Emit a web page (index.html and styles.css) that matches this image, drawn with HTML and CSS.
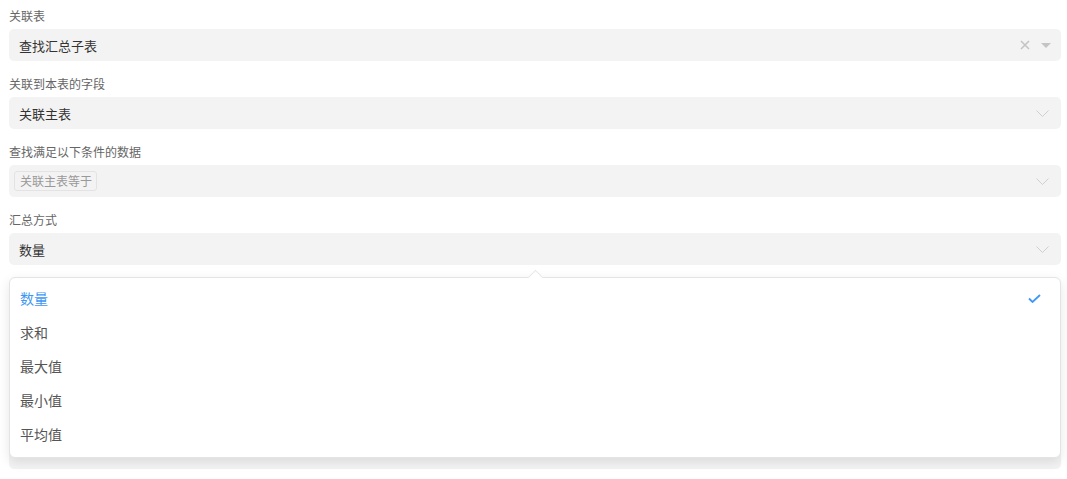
FILE: index.html
```html
<!DOCTYPE html>
<html lang="zh">
<head>
<meta charset="utf-8">
<link rel="stylesheet" href="styles.css">
</head>
<body>
<div class="form">
  <div class="group">
    <div class="label">关联表</div>
    <div class="select">
      <span class="value">查找汇总子表</span>
      <span class="icons">
        <svg class="clear" width="10" height="10" viewBox="0 0 10 10"><path d="M1 1L9 9M9 1L1 9" stroke="#c4c4c4" stroke-width="1.6" fill="none"/></svg>
        <svg class="caret" width="10" height="5" viewBox="0 0 10 5"><path d="M0 0H10L5 5Z" fill="#c4c4c4"/></svg>
      </span>
    </div>
  </div>
  <div class="group">
    <div class="label">关联到本表的字段</div>
    <div class="select">
      <span class="value">关联主表</span>
      <svg class="chev" width="13" height="7" viewBox="0 0 13 7"><path d="M0.5 0.5L6.5 6.5L12.5 0.5" stroke="#cfcfcf" stroke-width="1" fill="none"/></svg>
    </div>
  </div>
  <div class="group">
    <div class="label">查找满足以下条件的数据</div>
    <div class="select tags">
      <span class="tag">关联主表等于</span>
      <svg class="chev" width="13" height="7" viewBox="0 0 13 7"><path d="M0.5 0.5L6.5 6.5L12.5 0.5" stroke="#cfcfcf" stroke-width="1" fill="none"/></svg>
    </div>
  </div>
  <div class="group open">
    <div class="label">汇总方式</div>
    <div class="select">
      <span class="value">数量</span>
      <svg class="chev" width="13" height="7" viewBox="0 0 13 7"><path d="M0.5 0.5L6.5 6.5L12.5 0.5" stroke="#cfcfcf" stroke-width="1" fill="none"/></svg>
    </div>
    <div class="dropdown">
      <div class="option selected"><span>数量</span>
        <svg width="13" height="9" viewBox="0 0 13 9"><path d="M1 4.5L4.5 8L12 1" stroke="#3f99f4" stroke-width="1.8" fill="none"/></svg>
      </div>
      <div class="option"><span>求和</span></div>
      <div class="option"><span>最大值</span></div>
      <div class="option"><span>最小值</span></div>
      <div class="option"><span>平均值</span></div>
    </div>
  </div>
  <div class="group covered">
    <div class="select"></div>
  </div>
</div>
</body>
</html>
```

FILE: styles.css
```css
html, body {
  margin: 0;
  padding: 0;
  background: #fff;
  overflow: hidden;
}
body {
  font-family: "Noto Sans CJK SC", "Noto Sans", sans-serif;
  color: #333;
  height: 479px;
}
.form {
  padding: 6px 6px 0 9px;
}
.group {
  margin-bottom: 13px;
  position: relative;
}
.group.covered {
  margin-top: 172px;
}
.label {
  height: 20px;
  line-height: 20px;
  font-size: 12px;
  color: #666;
  margin-bottom: 3px;
}
.select {
  height: 32px;
  background: #f3f3f3;
  border-radius: 5px;
  display: flex;
  align-items: center;
  justify-content: space-between;
  padding: 0 11px 0 10px;
  box-sizing: border-box;
}
.value {
  font-size: 13px;
  color: #333;
}
.icons {
  display: flex;
  align-items: center;
  gap: 11px;
  margin-right: -1px;
}
.chev {
  margin-right: 1px;
}
.tags {
  padding-left: 5px;
}
.tag {
  font-size: 12px;
  color: #999;
  border: 1px solid #e3e3e3;
  border-radius: 3px;
  height: 18px;
  line-height: 18px;
  padding: 0 4px 0 5px;
  background: #f3f3f3;
}
.dropdown {
  position: absolute;
  left: 0;
  right: 0;
  top: 67px;
  z-index: 5;
  background: #fff;
  border: 1px solid #e4e4e4;
  border-radius: 6px;
  box-shadow: 0 4px 12px rgba(0, 0, 0, 0.1);
  padding: 3px 0 6px;
}
.dropdown::before {
  content: "";
  position: absolute;
  top: -6px;
  left: 520px;
  width: 10px;
  height: 10px;
  background: #fff;
  border-left: 1px solid #e9e9e9;
  border-top: 1px solid #e9e9e9;
  transform: rotate(45deg);
}
.option {
  height: 34px;
  display: flex;
  align-items: center;
  justify-content: space-between;
  padding: 0 19px 0 10px;
  font-size: 14px;
  color: #555;
}
.option.selected {
  color: #3f99f4;
}
```
